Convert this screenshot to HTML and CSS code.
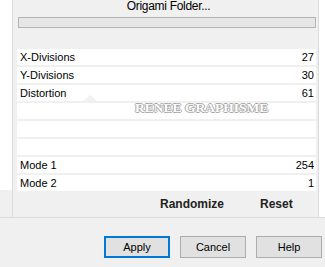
FILE: index.html
```html
<!DOCTYPE html>
<html lang="en">
<head>
  <meta charset="UTF-8" />
  <title>Origami Folder</title>
  <link rel="stylesheet" href="styles.css">
</head>
<body>
  <div class="ventana">
    <div class="zona">
      <div class="lado-izq">
        <div class="blanco"></div>
        <div class="gris"></div>
      </div>

      <div class="panel">
        <div class="titulo">Origami Folder...</div>
        <div class="barra"></div>

        <div class="filas">
          <div class="fila"><span>X-Divisions</span><span>27</span></div>
          <div class="fila"><span>Y-Divisions</span><span>30</span></div>
          <div class="fila"><span>Distortion</span><span>61</span><i class="flecha"></i></div>
          <div class="fila"></div>
          <div class="fila"></div>
          <div class="fila"></div>
          <div class="fila"><span>Mode 1</span><span>254</span></div>
          <div class="fila"><span>Mode 2</span><span>1</span></div>
        </div>

        <div class="acciones">
          <span class="randomize">Randomize</span>
          <span class="reset">Reset</span>
        </div>

        <div class="marca">RENEE GRAPHISME</div>
      </div>

      <div class="lado-der"></div>
    </div>

    <div class="botones">
      <button class="activo">Apply</button>
      <button>Cancel</button>
      <button>Help</button>
    </div>
  </div>
</body>
</html>
```

FILE: styles.css
```css
* {
  box-sizing: border-box;
}

html, body {
  margin: 0;
  padding: 0;
  width: 325px;
  height: 267px;
  overflow: hidden;
  background-color: #f0f0f0;
  font-family: 'Liberation Sans', Arial, sans-serif;
  font-size: 11px;
  color: #000;
}

.ventana {
  display: flex;
  flex-direction: column;
  height: 267px;
}

.zona {
  display: flex;
  height: 218px;
  border-bottom: 1px solid #dcdcdc;
}

.lado-izq {
  width: 12px;
  display: flex;
  flex-direction: column;
}

.lado-izq .blanco {
  flex: 1;
  background-color: #fff;
}

.lado-izq .gris {
  height: 27px;
  background-color: #f0f0f0;
}

.lado-der {
  width: 6px;
  background-color: #fff;
}

.panel {
  position: relative;
  width: 307px;
  background-color: #f0f0f0;
  border-left: 1px solid #dcdcdc;
  border-right: 1px solid #dcdcdc;
  padding: 0 2px 0 4px;
  display: flex;
  flex-direction: column;
}

.titulo {
  height: 14px;
  line-height: 12px;
  text-align: center;
  letter-spacing: -0.3px;
  padding-left: 4px;
  font-size: 12px;
}

.barra {
  margin: 3px 0 0 1px;
  height: 11px;
  border: 1px solid #b4b4b4;
  background-color: #e6e6e6;
}

.filas {
  margin-top: 21px;
  display: flex;
  flex-direction: column;
  gap: 2px;
}

.fila {
  position: relative;
  height: 16px;
  background-color: #fff;
  display: flex;
  justify-content: space-between;
  align-items: center;
  padding: 0 2px 0 3px;
}

.flecha {
  position: absolute;
  left: 66px;
  top: 10px;
  width: 0;
  height: 0;
  border-left: 7px solid transparent;
  border-right: 7px solid transparent;
  border-bottom: 6px solid #f2f2f2;
}

.acciones {
  height: 26px;
  display: flex;
  align-items: center;
  font-size: 12px;
  font-weight: bold;
  color: #222;
}

.randomize {
  margin-left: 143px;
}

.reset {
  margin-left: 36px;
}

.marca {
  position: absolute;
  left: 122px;
  top: 100px;
  font-family: 'Liberation Serif', 'Times New Roman', serif;
  font-weight: bold;
  font-size: 13.5px;
  color: #fdfdfd;
  text-shadow: 1px 0 0 #a8a8a8, -1px 0 0 #a8a8a8, 0 1px 0 #a8a8a8, 0 -1px 0 #a8a8a8;
}

.botones {
  display: flex;
  justify-content: flex-end;
  gap: 10px;
  padding: 18px 3px 0 0;
}

button {
  width: 66px;
  height: 22px;
  padding: 0;
  font-family: 'Liberation Sans', Arial, sans-serif;
  font-size: 11px;
  color: #000;
  background-color: #e1e1e1;
  border: 1px solid #adadad;
  border-radius: 0;
}

button.activo {
  border: 2px solid #0078d7;
}
```
